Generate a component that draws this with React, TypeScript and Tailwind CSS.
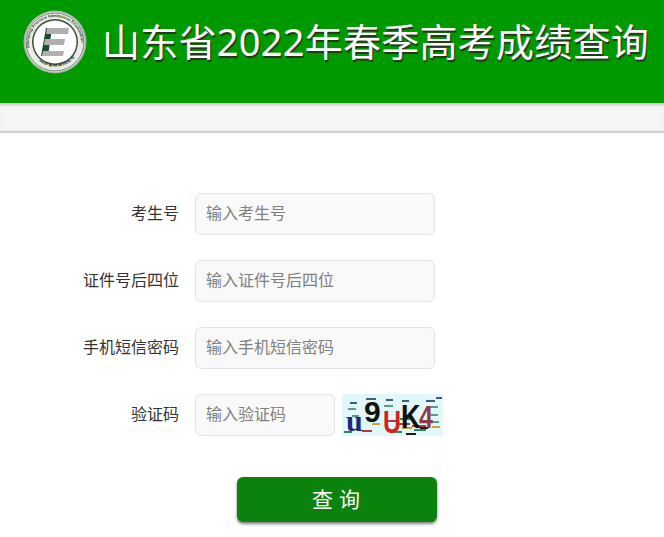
const fields = [
  { label: "考生号", placeholder: "输入考生号" },
  { label: "证件号后四位", placeholder: "输入证件号后四位" },
  { label: "手机短信密码", placeholder: "输入手机短信密码" },
];

const font = "font-['Liberation_Sans','Noto_Sans_CJK_SC',sans-serif]";

function Logo() {
  return (
    <svg width="64" height="64" viewBox="0 0 64 64" className="shrink-0">
      <circle cx="32" cy="32" r="31.5" fill="#a9b3a9" />
      <circle cx="32" cy="32" r="30" fill="#e9ede6" />
      <circle cx="32" cy="32" r="29" fill="none" stroke="#5c6b5c" strokeWidth="0.8" />
      <defs>
        <path id="ringTop" d="M6.5 38 a26 26 0 1 1 51 0" />
        <path id="ringBottom" d="M12 46 a24.5 24.5 0 0 0 40 0" />
      </defs>
      <text fontSize="4" fill="#2f3d2f" fontFamily="Liberation Sans" fontWeight="700">
        <textPath href="#ringTop">Shandong Province Admissions Examination</textPath>
      </text>
      <text fontSize="5" fill="#1d2a1d" fontWeight="700" fontFamily="Noto Sans CJK SC">
        <textPath href="#ringBottom" startOffset="6">山东省教育招生考试院</textPath>
      </text>
      <circle cx="32" cy="32" r="23" fill="#3a4f3a" />
      <circle cx="32" cy="32" r="21.5" fill="#ffffff" />
      <path d="M18 46 L23 18 L29 18 L25 46 Z" fill="#1f4a28" />
      <path d="M24 18 H46 L45 24 H23 Z" fill="#b0b0b0" />
      <path d="M22 29 H42 L41 35 H21 Z" fill="#b0b0b0" />
      <path d="M20 41 H41 L40 46 H19 Z" fill="#b0b0b0" />
    </svg>
  );
}

function Captcha() {
  return (
    <svg width="101" height="42" viewBox="0 0 101 42" className="ml-[7px] shrink-0">
      <rect width="101" height="42" fill="#e2f8f8" />
      <g strokeWidth="2">
        <path d="M8 9h7M24 5h10M44 6h7M60 7h7M84 7h9M94 4h6" stroke="#3f5f78" />
        <path d="M6 15h8M10 22h7M42 12h9M86 13h10M86 21h10M88 28h9" stroke="#5f9a8a" />
        <path d="M46 27h10M56 30h12M70 32h14M20 37h10" stroke="#b03a3a" />
        <path d="M58 25h14M72 36h12M48 38h12M2 38h8" stroke="#2f8a5a" />
        <path d="M64 40h10M26 10h8M78 34h8" stroke="#1b1b1b" />
        <path d="M30 30h8M60 34h10M90 33h8" stroke="#c9a23a" />
      </g>
      <text x="4" y="37" fontSize="30" fontWeight="700" fill="#1c2a80" fontFamily="Liberation Serif">u</text>
      <text x="22" y="28" fontSize="30" fontWeight="700" fill="#111" fontFamily="Liberation Sans">9</text>
      <text transform="translate(41 39) scale(1 1.25)" fontSize="25" fontWeight="700" fill="#d81e1e" fontFamily="Liberation Sans">U</text>
      <text transform="translate(59 34) scale(1 1.2)" fontSize="27" fontWeight="700" fill="#111" fontFamily="Liberation Sans">K</text>
      <text transform="translate(77 34) scale(1 1.25)" fontSize="25" fontWeight="700" fill="#8a3a4a" fontFamily="Liberation Sans">4</text>
    </svg>
  );
}

export default function App() {
  return (
    <div className={`h-[537px] w-[664px] overflow-hidden bg-white ${font}`}>
      <div className="flex h-[103px] items-start bg-[#009900] pl-[23px] pt-[10px]">
        <Logo />
        <h1 className="ml-[15px] mt-[5px] whitespace-nowrap font-['Noto_Sans','Noto_Sans_CJK_SC',sans-serif] text-[38px] leading-[52px] font-normal tracking-[0.25px] text-white [text-shadow:1px_2px_1px_#26331a]">
          山东省2022年春季高考成绩查询
        </h1>
      </div>
      <div className="h-[30px] bg-[#f5f5f5] shadow-[inset_0_4px_3px_-2px_rgba(0,0,0,0.2),inset_0_-3px_2px_-1px_rgba(0,0,0,0.18)]" />

      <form className="flex flex-col gap-[25px] pt-[60px]">
        {fields.map((field) => (
          <div key={field.label} className="flex h-[42px] items-center">
            <label className="w-[179px] text-right text-[16px] text-[#333]">{field.label}</label>
            <input
              placeholder={field.placeholder}
              className="ml-4 h-[42px] w-[240px] rounded-md border border-[#e3e3e3] bg-[#f9f9f9] px-[10px] text-[16px] outline-none placeholder:text-[#808080]"
            />
          </div>
        ))}
        <div className="flex h-[42px] items-center">
          <label className="w-[179px] text-right text-[16px] text-[#333]">验证码</label>
          <input
            placeholder="输入验证码"
            className="ml-4 h-[42px] w-[140px] rounded-md border border-[#e3e3e3] bg-[#f9f9f9] px-[10px] text-[16px] outline-none placeholder:text-[#808080]"
          />
          <Captcha />
        </div>
        <div className="pl-[237px] pt-4">
          <button
            type="button"
            className="h-[45px] w-[200px] rounded-md bg-[#0b820b] pr-[2px] text-[21px] text-white shadow-[0_2px_3px_rgba(0,0,0,0.5)]"
          >
            查 询
          </button>
        </div>
      </form>
    </div>
  );
}
